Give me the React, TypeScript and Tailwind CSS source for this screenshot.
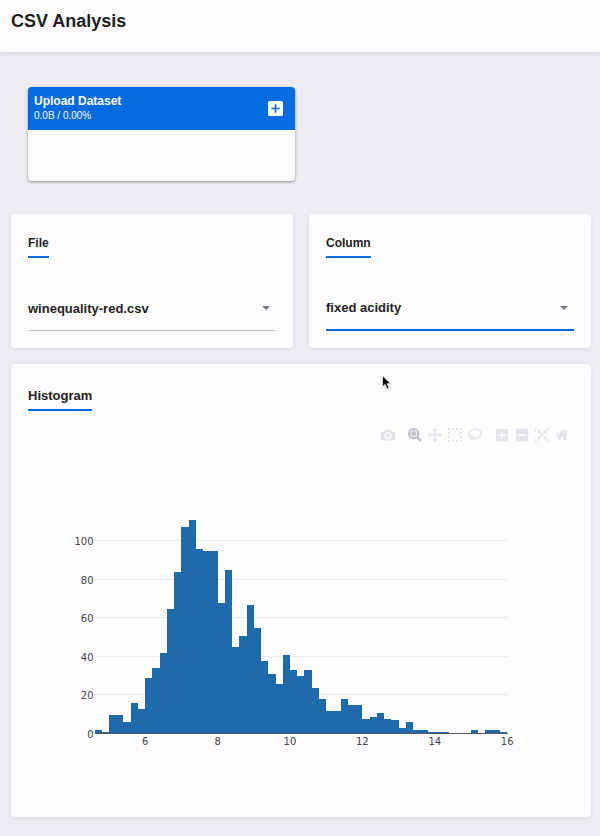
import React, { useId, useState } from "react";

const counts = [
  2, 1, 10, 10, 6, 16, 13, 29, 34, 42, 65, 84, 107, 111, 96, 95, 95, 68, 85, 45,
  51, 67, 55, 38, 31, 26, 41, 33, 30, 33, 24, 18, 12, 12, 18, 15, 15, 8, 9, 11,
  8, 7, 3, 6, 2, 2, 1, 1, 1, 0, 0, 0, 2, 0, 2, 2, 1,
];

const FIRST_BIN = 4.6;
const BIN_SIZE = 0.2;
const LEFT = 66.5;
const BASE = 287;
const X_UNIT = 36.2;
const Y_UNIT = 1.93;

const xAt = (value: number) => LEFT + (value - FIRST_BIN) * X_UNIT;
const yAt = (count: number) => BASE - count * Y_UNIT;

type Tool = { name: string; width: number; path: string; active?: boolean };

const toolGroups: Tool[][] = [
  [
    {
      name: "Download plot as a png",
      width: 1000,
      path: "m500 450c-83 0-150-67-150-150 0-83 67-150 150-150 83 0 150 67 150 150 0 83-67 150-150 150z m400 150h-120c-16 0-34 13-39 29l-31 93c-6 15-23 28-40 28h-340c-16 0-34-13-39-28l-31-94c-6-15-23-28-40-28h-120c-55 0-100-45-100-100v-450c0-55 45-100 100-100h800c55 0 100 45 100 100v450c0 55-45 100-100 100z m-400-550c-138 0-250 112-250 250 0 138 112 250 250 250 138 0 250-112 250-250 0-138-112-250-250-250z m365 380c-19 0-35 16-35 35 0 19 16 35 35 35 19 0 35-16 35-35 0-19-16-35-35-35z",
    },
  ],
  [
    {
      name: "Zoom",
      width: 1000,
      active: true,
      path: "m1000-25l-250 251c40 63 63 138 63 218 0 224-182 406-407 406-224 0-406-182-406-406s183-406 407-406c80 0 155 22 218 62l250-250 125 125z m-812 250l0 438 437 0 0-438-437 0z m62 375l313 0 0-312-313 0 0 312z",
    },
    {
      name: "Pan",
      width: 1000,
      path: "m1000 350l-187 188 0-125-250 0 0 250 125 0-188 187-187-187 125 0 0-250-250 0 0 125-188-188 186-187 0 125 252 0 0-250-125 0 187-188 188 188-125 0 0 250 250 0 0-126 187 188z",
    },
    {
      name: "Box Select",
      width: 1000,
      path: "m0 850l0-143 143 0 0 143-143 0z m286 0l0-143 143 0 0 143-143 0z m285 0l0-143 143 0 0 143-143 0z m286 0l0-143 143 0 0 143-143 0z m-857-286l0-143 143 0 0 143-143 0z m857 0l0-143 143 0 0 143-143 0z m-857-285l0-143 143 0 0 143-143 0z m857 0l0-143 143 0 0 143-143 0z m-857-286l0-143 143 0 0 143-143 0z m286 0l0-143 143 0 0 143-143 0z m285 0l0-143 143 0 0 143-143 0z m286 0l0-143 143 0 0 143-143 0z",
    },
    {
      name: "Lasso Select",
      width: 1031,
      path: "m1018 538c-36 207-290 336-568 286-277-48-473-256-436-463 10-57 36-108 76-151-13-66 11-137 68-183 34-28 75-41 114-42l-55-70 0 0c-2-1-3-2-4-3-10-14-8-34 5-45 14-11 34-8 45 4 1 1 2 3 2 5l0 0 113 140c16 11 31 24 45 40 4 3 6 7 8 11 48-3 100 0 151 9 278 48 473 255 436 462z m-624-379c-80 14-149 48-197 96 42 42 109 47 156 9 33-26 47-66 41-105z m-187-74c-19 16-33 37-39 60 50-32 109-55 174-68-42-25-95-24-135 8z m360 75c-34-7-69-9-102-8 8 62-16 128-68 170-73 59-175 54-244-5-9 20-16 40-20 61-28 159 121 317 333 354s407-60 434-217c28-159-121-318-333-355z",
    },
  ],
  [
    {
      name: "Zoom in",
      width: 875,
      path: "m1 787l0-875 875 0 0 875-875 0z m687-500l-187 0 0-187-125 0 0 187-188 0 0 125 188 0 0 187 125 0 0-187 187 0 0-125z",
    },
    {
      name: "Zoom out",
      width: 875,
      path: "m0 788l0-876 875 0 0 876-875 0z m688-500l-500 0 0 125 500 0 0-125z",
    },
    {
      name: "Autoscale",
      width: 1000,
      path: "m250 850l-187 0-63 0 0-62 0-188 63 0 0 188 187 0 0 62z m688 0l-188 0 0-62 188 0 0-188 62 0 0 188 0 62-62 0z m-875-938l0 188-63 0 0-188 0-62 63 0 187 0 0 62-187 0z m875 188l0-188-188 0 0-62 188 0 62 0 0 62 0 188-62 0z m-125 188l-1 0-93-94-156 156 156 156 92-93 2 0 0 250-250 0 0-2 93-92-156-156-156 156 94 92 0 2-250 0 0-250 0 0 93 93 157-156-157-156-93 94 0 0 0-250 250 0 0 0-94 93 156 157 156-157-93-93 0 0 250 0 0 250z",
    },
    {
      name: "Reset axes",
      width: 928,
      path: "m786 296v-267q0-15-11-26t-25-10h-214v214h-143v-214h-214q-15 0-25 10t-11 26v267q0 1 0 2t0 2l321 264 321-264q1-1 1-4z m124 39l-34-41q-5-5-12-6h-2q-7 0-12 3l-386 322-386-322q-7-4-13-4-7 2-12 7l-35 41q-4 5-3 13t6 12l401 334q18 15 42 15t43-15l136-114v109q0 8 5 13t13 5h107q8 0 13-5t5-13v-227l122-102q5-5 6-12t-4-13z",
    },
  ],
];

function ToolBar() {
  return (
    <div className="flex h-6 items-center justify-end gap-[7px] pr-[2px]">
      {toolGroups.map((group, index) => (
        <div key={index} className="flex">
          {group.map((tool) => (
            <button
              key={tool.name}
              type="button"
              aria-label={tool.name}
              className={`flex w-5 justify-center ${tool.active ? "text-[#c3c2c7]" : "text-[#e4e3e8]"}`}
            >
              <svg viewBox={`0 0 ${tool.width} 1000`} className="h-[14px] w-[14px]" fill="currentColor" aria-hidden="true">
                <path transform="matrix(1 0 0 -1 0 850)" d={tool.path} />
              </svg>
            </button>
          ))}
        </div>
      ))}
    </div>
  );
}

function HistogramChart() {
  return (
    <svg viewBox="0 0 546 353" className="block w-full" role="img" aria-label="Histogram of fixed acidity">
      <g shapeRendering="crispEdges">
        {[20, 40, 60, 80, 100].map((tick) => (
          <rect key={tick} x={LEFT} y={Math.round(yAt(tick)) - 1} width={413} height={1} fill="#ebeaef" />
        ))}
        {counts.map((count, index) => (
          <rect
            key={index}
            x={xAt(FIRST_BIN + index * BIN_SIZE)}
            y={yAt(count)}
            width={BIN_SIZE * X_UNIT}
            height={count * Y_UNIT}
            fill="#1e6aaa"
          />
        ))}
        <rect x={LEFT} y={BASE - 1} width={413} height={1} fill="#55555c" />
      </g>
      <g className="fill-[#444449] font-['DejaVu_Sans',sans-serif] text-[10px]">
        {[0, 20, 40, 60, 80, 100].map((tick) => (
          <text key={tick} x={LEFT - 1} y={yAt(tick) + 4} textAnchor="end">
            {tick}
          </text>
        ))}
        {[6, 8, 10, 12, 14, 16].map((tick) => (
          <text key={tick} x={xAt(tick)} y={BASE + 11} textAnchor="middle">
            {tick}
          </text>
        ))}
      </g>
    </svg>
  );
}

type PickerProps = { title: string; options: string[]; focused?: boolean };

function Picker({ title, options, focused }: PickerProps) {
  const id = useId();
  const [value, setValue] = useState(options[0]);
  return (
    <section className="rounded-[4px] bg-[#fdfbfe] px-[17px] pt-5 pb-[17px] shadow-[0_1px_4px_rgba(60,64,90,0.10)]">
      <label htmlFor={id} className="block w-fit border-b-2 border-[#066ae0] pb-[3px] text-xs leading-[19px] font-bold">
        {title}
      </label>
      <div className="relative mt-[27px]">
        <select
          id={id}
          value={value}
          onChange={(event) => setValue(event.target.value)}
          className={`block h-[46px] w-full appearance-none bg-transparent pt-[2px] pr-6 text-[13px] font-bold outline-none ${
            focused ? "border-b-2 border-[#066ae0]" : "border-b border-[#c4c3c8]"
          }`}
        >
          {options.map((option) => (
            <option key={option}>{option}</option>
          ))}
        </select>
        <svg
          viewBox="0 0 8 4"
          className="pointer-events-none absolute top-[21px] right-[6px] h-1 w-2"
          fill="#77767b"
          aria-hidden="true"
        >
          <path d="M0 0h8L4 4z" />
        </svg>
      </div>
    </section>
  );
}

export default function App() {
  return (
    <div className="relative min-h-screen bg-[#ecedf2] font-['Liberation_Sans',Arial,sans-serif] text-[#1f1f22]">
      <header className="h-[53px] border-b border-[#dbdbdf] bg-[#fdfbfe] px-[11px] pt-[9px] shadow-[0_1px_5px_rgba(60,64,90,0.08)]">
        <h1 className="text-lg leading-6 font-bold">CSV Analysis</h1>
      </header>

      <main className="pt-[34px] pr-[9px] pb-[18px] pl-[11px]">
        <section className="ml-[17px] w-[267px] overflow-hidden rounded-[4px] bg-[#fdfbfe] shadow-[0_1px_3px_rgba(0,0,0,0.4)]">
          <div className="flex h-[43px] items-center justify-between bg-[#036be0] pr-3 pl-[6px] text-[#fdfbfe]">
            <div>
              <h2 className="text-xs leading-[15px] font-bold">Upload Dataset</h2>
              <p className="text-[10px] leading-[14px]">0.0B / 0.00%</p>
            </div>
            <button type="button" aria-label="Add files">
              <svg viewBox="0 0 15 15" className="block size-[15px]" aria-hidden="true">
                <rect width="15" height="15" rx="1.5" fill="#fdfbfe" />
                <path d="M7.5 3.3v8.4M3.3 7.5h8.4" stroke="#036be0" strokeWidth="1.6" />
              </svg>
            </button>
          </div>
          <div className="h-[51px]" />
        </section>

        <div className="mt-[33px] grid grid-cols-2 gap-4">
          <Picker title="File" options={["winequality-red.csv"]} />
          <Picker title="Column" options={["fixed acidity"]} focused />
        </div>

        <section className="mt-4 rounded-[4px] bg-[#fdfbfe] px-[17px] pt-[22px] pb-[17px] shadow-[0_1px_4px_rgba(60,64,90,0.10)]">
          <h2 className="w-fit border-b-2 border-[#066ae0] pb-[4px] text-[13px] leading-[19px] font-bold">
            Histogram
          </h2>
          <div className="mt-3 bg-[#fefcff]">
            <ToolBar />
            <HistogramChart />
          </div>
        </section>
      </main>

      <svg
        viewBox="0 0 10 15"
        className="pointer-events-none absolute top-[375px] left-[382px] h-[15px] w-[10px] drop-shadow-sm"
        aria-hidden="true"
      >
        <path d="M.5.8v11l2.6-2.4 2 4.6 2-.9-2-4.4h3.5z" fill="#0a0a0c" stroke="#fff" strokeWidth=".7" />
      </svg>
    </div>
  );
}
